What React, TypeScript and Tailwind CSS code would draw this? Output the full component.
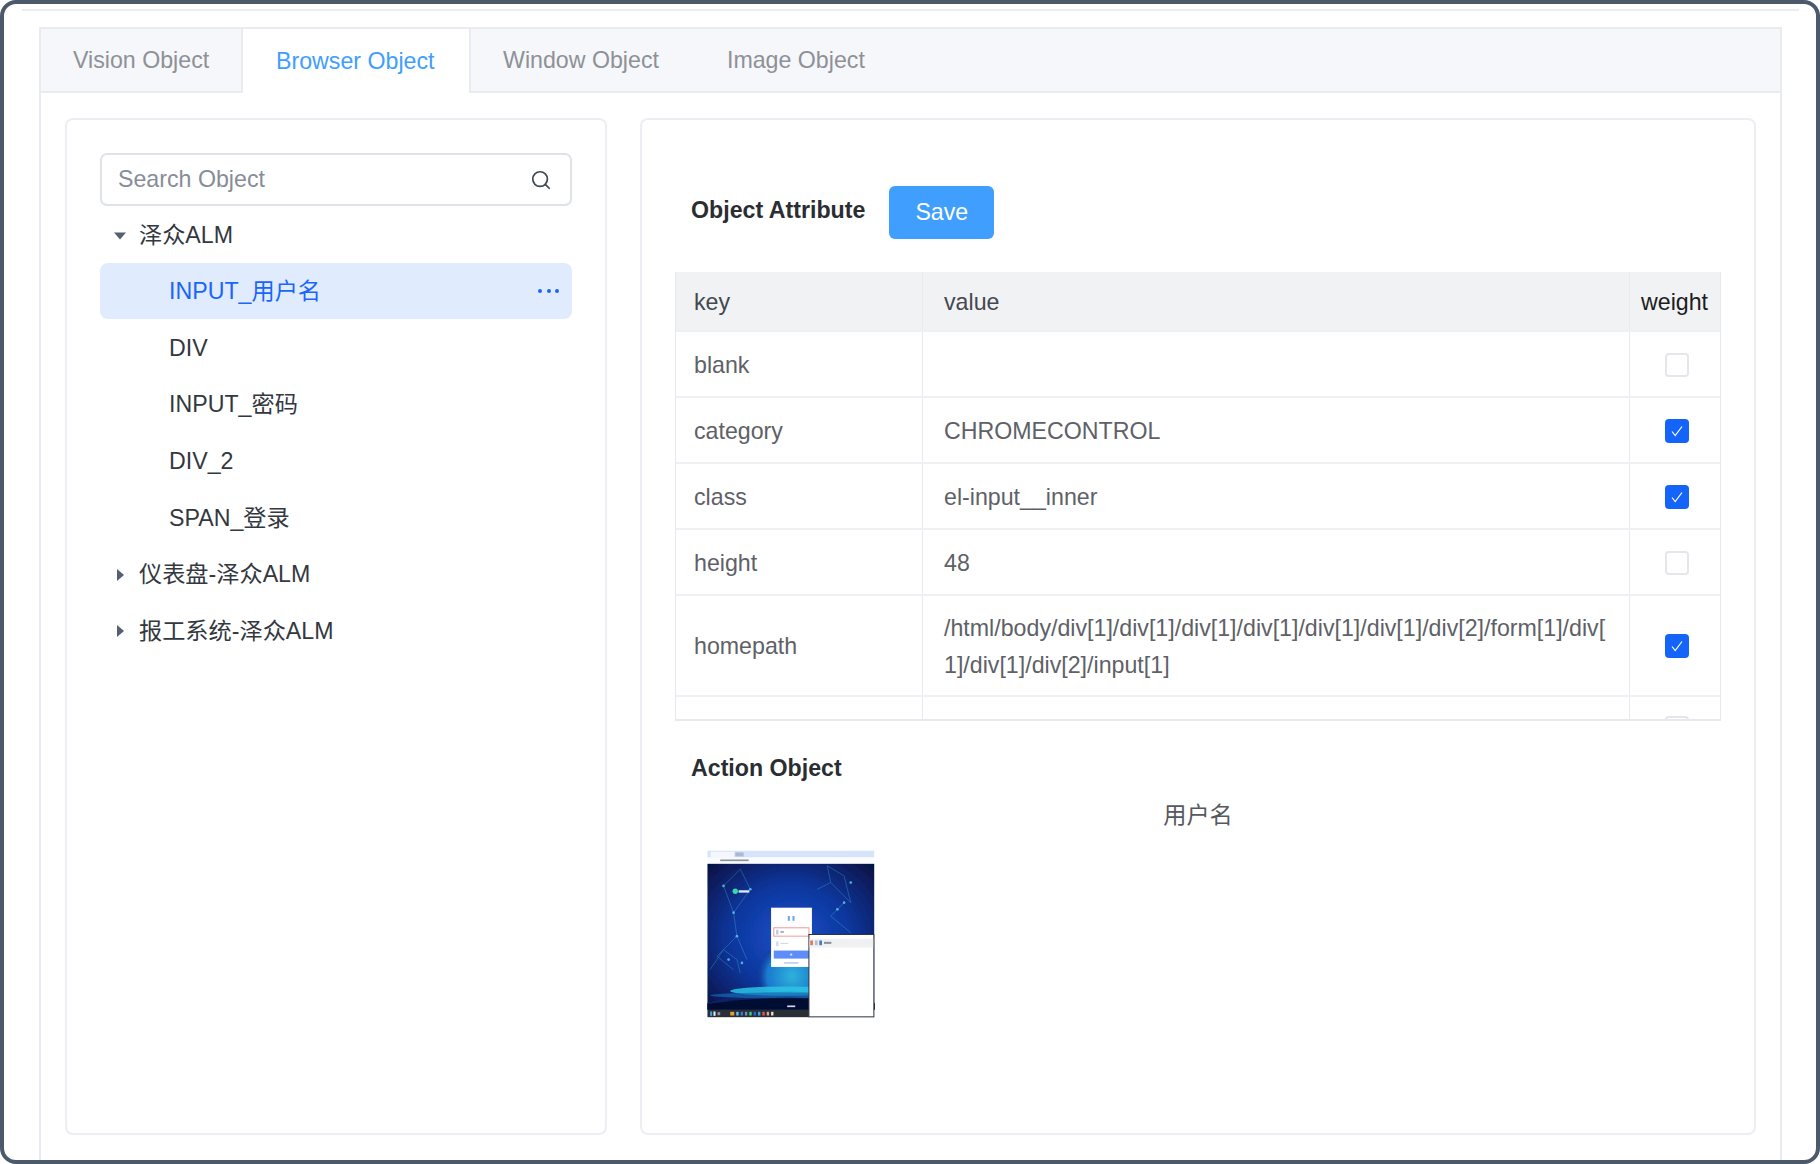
import React from "react";
import { Search } from "lucide-react";

const FONT = "[font-family:'Liberation_Sans','Noto_Sans_CJK_SC',sans-serif]";

function Caret({ open }: { open?: boolean }) {
  return (
    <svg width="14" height="14" viewBox="0 0 14 14" className="shrink-0">
      {open ? <path d="M1 3.5h12L7 10.5z" fill="#56606e" /> : <path d="M4 1v12l7-6z" fill="#56606e" />}
    </svg>
  );
}

function Box({ checked }: { checked?: boolean }) {
  if (checked)
    return (
      <span className="flex h-[24px] w-[24px] items-center justify-center rounded-[4px] bg-[#1464fa]">
        <svg width="16" height="16" viewBox="0 0 16 16" fill="none">
          <path d="M3 8.5l3.2 4L13 3.5" stroke="#fff" strokeWidth="1.2" />
        </svg>
      </span>
    );
  return <span className="block h-[24px] w-[24px] rounded-[4px] border-2 border-[#e4e6ec] bg-white" />;
}

function Row({ k, v, c, h }: { k: string; v?: React.ReactNode; c?: boolean; h: string }) {
  return (
    <div className={`flex shrink-0 border-b-2 border-[#eff0f4] ${h}`}>
      <div className="flex w-[247px] items-center border-r border-[#e8eaef] pl-[18px] pt-[2px] text-[#5e6167]">{k}</div>
      <div className="flex w-[707px] items-center border-r border-[#e8eaef] pl-[21px] pr-[14px] pt-[2px] leading-[37px] text-[#5e6167]">{v}</div>
      <div className="flex flex-1 items-center justify-center pl-[3px] pt-[1px]">
        <Box checked={c} />
      </div>
    </div>
  );
}

function Thumb() {
  return (
    <svg width="221" height="221" viewBox="0 0 660 660" className="ml-[-27px] mt-[-26px] block">
      <defs>
        <radialGradient id="bg" cx="0.5" cy="0.5" r="0.72">
          <stop offset="0" stopColor="#1650cc" />
          <stop offset="0.5" stopColor="#0f369c" />
          <stop offset="1" stopColor="#050f3c" />
        </radialGradient>
        <radialGradient id="glow" cx="0.5" cy="0.5" r="0.5">
          <stop offset="0" stopColor="#35cfe8" />
          <stop offset="0.7" stopColor="#1c86d8" />
          <stop offset="1" stopColor="#0c2f80" stopOpacity="0" />
        </radialGradient>
        <filter id="soft">
          <feGaussianBlur stdDeviation="2.2" />
        </filter>
      </defs>
      <g filter="url(#soft)">
        <rect x="82" y="65" width="498" height="20" fill="#d6e3fa" />
        <rect x="92" y="68" width="70" height="16" fill="#f4f7fd" />
        <rect x="165" y="70" width="25" height="12" fill="#aab8d4" />
        <rect x="82" y="85" width="498" height="19" fill="#fafbfd" />
        <rect x="120" y="91" width="85" height="5" fill="#8a93a0" />
        <rect x="82" y="104" width="498" height="436" fill="url(#bg)" />
        <ellipse cx="335" cy="440" rx="110" ry="110" fill="url(#glow)" opacity="0.8" />
        <path d="M82 520q240-70 500 0v20H82z" fill="#0a2368" />
        <ellipse cx="315" cy="484" rx="165" ry="14" fill="#2cc4e4" opacity="0.85" />
        <ellipse cx="315" cy="497" rx="225" ry="9" fill="#1668b8" opacity="0.7" />
        <path d="M82 540v-18q240-36 498 0v18z" fill="#06102f" opacity="0.95" />
        <g stroke="#4ab4e4" strokeWidth="2" fill="none" opacity="0.5">
          <path d="M130 170l50-50 30 60-50 70-30-80M160 250l10 70-60 60 50 40M170 320l30 70" />
          <path d="M440 110l50 30 20 80-60-60-10-50M490 220l-40 40 60 50M410 180l40-20" />
          <path d="M90 420l40-60 40 30 10 40" />
        </g>
        <g fill="#58d0f4" opacity="0.8">
          <circle cx="160" cy="250" r="4" /><circle cx="130" cy="170" r="4" /><circle cx="210" cy="180" r="4" />
          <circle cx="170" cy="320" r="4" /><circle cx="490" cy="220" r="4" /><circle cx="510" cy="160" r="4" />
          <circle cx="470" cy="240" r="4" /><circle cx="145" cy="390" r="4" /><circle cx="185" cy="400" r="4" />
        </g>
        <circle cx="165" cy="186" r="8" fill="#38d8a8" />
        <rect x="175" y="183" width="32" height="7" fill="#dfe8f8" />
        <rect x="272" y="235" width="122" height="177" fill="#fff" />
        <rect x="322" y="260" width="6" height="14" fill="#6aa0ee" />
        <rect x="336" y="260" width="6" height="14" fill="#6aa0ee" />
        <rect x="280" y="295" width="105" height="25" fill="#fff" stroke="#f09a9a" strokeWidth="3" />
        <rect x="287" y="301" width="7" height="14" fill="#b9c9ee" />
        <rect x="300" y="305" width="10" height="5" fill="#9aa4b4" />
        <rect x="287" y="336" width="7" height="14" fill="#cfdaf3" />
        <rect x="300" y="340" width="24" height="3" fill="#d0d5de" />
        <rect x="280" y="363" width="105" height="24" fill="#5b8df8" />
        <rect x="329" y="372" width="6" height="6" fill="#dfe8fd" />
        <rect x="310" y="398" width="44" height="4" fill="#aec4f0" />
        <rect x="320" y="527" width="24" height="5" fill="#cfd8e8" />
        <rect x="82" y="540" width="303" height="22" fill="#2a2e36" />
        <g>
          <rect x="90" y="545" width="6" height="13" fill="#38a8f0" />
          <rect x="100" y="545" width="6" height="13" fill="#e8eef6" />
          <rect x="112" y="547" width="8" height="9" fill="#8a92a0" />
          <rect x="150" y="546" width="12" height="11" fill="#e0a030" />
          <rect x="168" y="546" width="7" height="11" fill="#6cc0f0" />
          <rect x="181" y="546" width="7" height="11" fill="#2f80e0" />
          <rect x="194" y="546" width="7" height="11" fill="#7a8ca8" />
          <rect x="207" y="546" width="7" height="11" fill="#38d880" />
          <rect x="220" y="546" width="7" height="11" fill="#2a64d8" />
          <rect x="233" y="546" width="7" height="11" fill="#40a0f0" />
          <rect x="246" y="546" width="7" height="11" fill="#e85848" />
          <rect x="259" y="546" width="7" height="11" fill="#d8a0a0" />
          <rect x="272" y="546" width="7" height="11" fill="#e8e0d0" />
        </g>
        <rect x="385" y="315" width="194" height="246" fill="#fff" stroke="#2a3240" strokeWidth="3" />
        <rect x="387" y="328" width="190" height="26" fill="#eff0f2" />
        <rect x="389" y="333" width="8" height="14" fill="#e07860" />
        <rect x="403" y="333" width="8" height="14" fill="#b8bcc4" />
        <rect x="416" y="333" width="8" height="14" fill="#4878c8" />
        <rect x="430" y="337" width="22" height="6" fill="#8a8e98" />
      </g>
    </svg>
  );
}

const TREE = ["DIV", "INPUT_密码", "DIV_2", "SPAN_登录"];

export default function App() {
  return (
    <div className={`${FONT} flex h-[1164px] w-[1820px] flex-col overflow-hidden rounded-[16px] border-[4px] border-[#4b596b] bg-white text-[23.2px]`}>
      <div className="ml-[18px] mr-[17px] mt-[5px] h-[2px] shrink-0 bg-[#ecedf2]" />
      <div className="ml-[35px] mr-[34px] mt-[16px] flex flex-1 flex-col border-x-2 border-t-2 border-[#e9ebf1]">
        <div className="flex h-[64px] shrink-0 border-b-2 border-[#e9ebf1] bg-[#f5f7fb] text-[#8e9196]">
          <div className="flex w-[202px] items-center border-r-2 border-[#e9ebf1] pl-[32px] pt-[1px]">Vision Object</div>
          <div className="mb-[-2px] flex w-[228px] items-center border-r-2 border-[#e9ebf1] bg-white pl-[33px] pt-[1px] text-[#409eff]">Browser Object</div>
          <div className="flex items-center pl-[32px] pt-[1px]">Window Object</div>
          <div className="flex items-center pl-[68px] pt-[1px]">Image Object</div>
        </div>
        <div className="flex flex-1 gap-[33px] pl-[24px] pr-[25px] pt-[25px]">
          <div className="h-[1017px] w-[542px] shrink-0 rounded-[8px] border-2 border-[#eceef3] px-[33px] pt-[33px]">
            <div className="flex h-[53px] items-center justify-between rounded-[7px] border-2 border-[#dfe2e9] pl-[16px] pr-[18px] text-[#878d97]">
              <span>Search Object</span>
              <Search size={22} strokeWidth={1.9} color="#3d4957" />
            </div>
            <div className="text-[#33383f]">
              <div className="flex h-[57px] items-center gap-[12px] pl-[13px] pt-[2px]">
                <Caret open />
                <span>泽众ALM</span>
              </div>
              <div className="flex h-[56px] items-center justify-between rounded-[8px] bg-[#e0ebfe] pl-[69px] pr-[13px] text-[#1a66fa]">
                <span>INPUT_用户名</span>
                <span className="flex gap-[4.5px]">
                  <i className="block h-[4px] w-[4px] rounded-full bg-[#1a66fa]" />
                  <i className="block h-[4px] w-[4px] rounded-full bg-[#1a66fa]" />
                  <i className="block h-[4px] w-[4px] rounded-full bg-[#1a66fa]" />
                </span>
              </div>
              {TREE.map((t) => (
                <div key={t} className="flex h-[56.6px] items-center pl-[69px] pt-[2px]">{t}</div>
              ))}
              {["仪表盘-泽众ALM", "报工系统-泽众ALM"].map((t) => (
                <div key={t} className="flex h-[56.6px] items-center gap-[12px] pl-[13px] pt-[2px]">
                  <Caret />
                  <span>{t}</span>
                </div>
              ))}
            </div>
          </div>
          <div className="h-[1017px] w-[1116px] shrink-0 rounded-[8px] border-2 border-[#eceef3]">
            <div className="flex items-center pl-[49px] pt-[66px]">
              <span className="mt-[-5px] font-bold text-[#2a2d31]">Object Attribute</span>
              <span className="ml-[24px] flex h-[53px] w-[105px] items-center justify-center rounded-[6px] bg-[#409eff] text-white">Save</span>
            </div>
            <div className="ml-[33px] mt-[33px] flex h-[449px] w-[1046px] flex-col overflow-hidden border-x border-b-2 border-[#e6e9f0]">
              <div className="flex h-[60px] shrink-0 border-b-2 border-[#eff0f4] bg-[#f1f2f4]">
                <div className="flex w-[247px] items-center border-r border-[#e8eaef] pl-[18px] pt-[2px] text-[#44484f]">key</div>
                <div className="flex w-[707px] items-center border-r border-[#e8eaef] pl-[21px] pt-[2px] text-[#44484f]">value</div>
                <div className="flex flex-1 items-center justify-center pr-[1px] pt-[2px] text-[#1b1d20]">weight</div>
              </div>
              <Row k="blank" h="h-[66px]" />
              <Row k="category" v="CHROMECONTROL" c h="h-[66px]" />
              <Row k="class" v="el-input__inner" c h="h-[66px]" />
              <Row k="height" v="48" h="h-[66px]" />
              <Row
                k="homepath"
                c
                h="h-[101px]"
                v={<span>/html/body/div[1]/div[1]/div[1]/div[1]/div[1]/div[1]/div[2]/form[1]/div[<br />1]/div[1]/div[2]/input[1]</span>}
              />
              <div className="flex flex-1">
                <div className="w-[247px] border-r border-[#e8eaef]" />
                <div className="w-[707px] border-r border-[#e8eaef]" />
                <div className="flex flex-1 justify-center pl-[3px] pt-[19px]"><Box /></div>
              </div>
            </div>
            <div className="ml-[49px] mt-[30px] font-bold text-[#2a2d31]">Action Object</div>
            <div className="mt-[12px] pl-[0px] text-center text-[#55585e]">用户名</div>
            <div className="ml-[65px] mt-[22px] h-[166px] w-[168px]">
              <Thumb />
            </div>
          </div>
        </div>
      </div>
    </div>
  );
}
